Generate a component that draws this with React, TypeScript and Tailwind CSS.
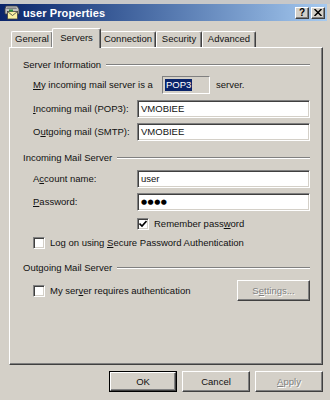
import React from "react";

const sunken =
  "border border-t-[#808080] border-l-[#808080] border-b-white border-r-white shadow-[inset_1px_1px_0_#404040,inset_-1px_-1px_0_#d4d0c8]";
const raised =
  "border border-t-white border-l-white border-r-[#404040] border-b-[#404040] shadow-[inset_-1px_-1px_0_#808080]";

function U({ children }: { children: React.ReactNode }) {
  return <span className="underline underline-offset-[1px] decoration-[1px]">{children}</span>;
}

function GroupHeader({ label }: { label: string }) {
  return (
    <div className="flex items-center h-[12px]">
      <span className="whitespace-nowrap">{label}</span>
      <div className="flex-1 ml-[5px] h-[2px] border-t border-t-[#808080] border-b border-b-white" />
    </div>
  );
}

function Field({ value, className = "" }: { value: React.ReactNode; className?: string }) {
  return (
    <div className={`bg-white ${sunken} h-[18px] flex items-center pl-[3px] ${className}`}>{value}</div>
  );
}

function Checkbox({ checked }: { checked?: boolean }) {
  return (
    <div className={`w-[12px] h-[12px] bg-white ${sunken} flex items-center justify-center shrink-0`}>
      {checked && (
        <svg width="8" height="8" viewBox="0 0 8 8">
          <path d="M0.5 3.5 L3 6 L7.5 1" stroke="#000" strokeWidth="1.6" fill="none" />
        </svg>
      )}
    </div>
  );
}

function Tab({ label, w, selected }: { label: string; w: number; selected?: boolean }) {
  return (
    <div
      style={{ width: w }}
      className={
        selected
          ? "relative z-10 h-[20px] -mb-px bg-[#d4d0c8] border-t border-l border-r border-t-white border-l-white border-r-[#404040] shadow-[inset_-1px_0_0_#808080] rounded-tl-[2px] rounded-tr-[2px] flex items-start justify-center pt-[3px] -mx-[1px]"
          : "h-[16px] border-t border-l border-r border-t-white border-l-white border-r-[#404040] shadow-[inset_-1px_0_0_#808080] rounded-tl-[2px] rounded-tr-[2px] flex items-start justify-center pt-[1px]"
      }
    >
      {label}
    </div>
  );
}

function Btn({
  children,
  w,
  disabled,
  def,
  h = 21,
}: {
  children: React.ReactNode;
  w: number;
  disabled?: boolean;
  def?: boolean;
  h?: number;
}) {
  const inner = (
    <div
      className={`${raised} bg-[#d4d0c8] flex items-center justify-center w-full h-full ${
        disabled ? "text-[#808080] [text-shadow:1px_1px_0_#fff]" : ""
      }`}
    >
      {children}
    </div>
  );
  return (
    <div style={{ width: w, height: h }} className={def ? "border border-black shrink-0" : "shrink-0"}>
      {inner}
    </div>
  );
}

export default function App() {
  return (
    <div className="w-[330px] h-[400px] bg-[#d4d0c8] overflow-hidden flex flex-col text-[9.5px] leading-[12px] text-[#111] font-['Liberation_Sans',Arial,sans-serif]">
      {/* top strip */}
      <div className="h-[4px] bg-[#c8c8c8]" />
      {/* title bar */}
      <div className="h-[17px] mr-[3px] bg-gradient-to-r from-[#0a246a] to-[#a6caf0] flex items-center pl-[4px] pr-[2px]">
        <svg width="16" height="15" viewBox="0 0 16 15" className="shrink-0">
          <path d="M2 1 H13 L15 4 V9 H1 V4 Z" fill="#c0c0c0" stroke="#404040" strokeWidth="0.8" />
          <path d="M3 2.5 H12 L13 4 H2 Z" fill="#808080" />
          <rect x="3.5" y="6.5" width="10" height="7.5" fill="#f8f0a0" stroke="#404040" strokeWidth="0.8" />
          <path d="M3.5 6.5 L8.5 10.5 L13.5 6.5" fill="none" stroke="#404040" strokeWidth="0.8" />
          <rect x="5" y="4.5" width="4" height="2" fill="#2e8b3a" />
        </svg>
        <span className="ml-[3px] text-white font-bold text-[11px] tracking-[0.1px]">user Properties</span>
        <div className="flex-1" />
        <div className="flex gap-[2px]">
          <div className={`${raised} bg-[#d4d0c8} w-[14px] h-[12px] bg-[#d4d0c8] flex items-center justify-center text-black font-bold text-[10px] leading-none`}>
            ?
          </div>
          <div className={`${raised} w-[14px] h-[12px] bg-[#d4d0c8] flex items-center justify-center`}>
            <svg width="8" height="7" viewBox="0 0 8 7">
              <path d="M0.5 0 L7.5 7 M7.5 0 L0.5 7" stroke="#000" strokeWidth="1.5" />
            </svg>
          </div>
        </div>
      </div>

      {/* tabs */}
      <div className="mt-[7px] h-[19px] flex items-end pl-[11px]">
        <Tab label="General" w={42} />
        <Tab label="Servers" w={49} selected />
        <Tab label="Connection" w={56} />
        <Tab label="Security" w={46} />
        <Tab label="Advanced" w={54} />
      </div>

      {/* panel */}
      <div className={`ml-[9px] w-[314px] h-[318px] ${raised} pl-[13px] pr-[12px] flex flex-col`}>
        <div className="mt-[11px]">
          <GroupHeader label="Server Information" />
        </div>

        <div className="mt-[5px] flex items-center pl-[10px] h-[18px]">
          <span className="w-[129px] whitespace-nowrap">
            <U>M</U>y incoming mail server is a
          </span>
          <div className="w-[48px] h-[18px] border border-t-[#808080] border-l-[#808080] border-b-white border-r-white flex items-center pl-[2px]">
            <span className="bg-[#0a246a] text-white px-[1px]">POP3</span>
          </div>
          <span className="ml-[6px]">server.</span>
        </div>

        <div className="mt-[6px] flex items-center pl-[10px]">
          <span className="flex-1 whitespace-nowrap">
            <U>I</U>ncoming mail (POP3):
          </span>
          <Field value="VMOBIEE" className="w-[173px]" />
        </div>

        <div className="mt-[5px] flex items-center pl-[10px]">
          <span className="flex-1 whitespace-nowrap">
            O<U>u</U>tgoing mail (SMTP):
          </span>
          <Field value="VMOBIEE" className="w-[173px]" />
        </div>

        <div className="mt-[11px]">
          <GroupHeader label="Incoming Mail Server" />
        </div>

        <div className="mt-[6px] flex items-center pl-[10px]">
          <span className="flex-1 whitespace-nowrap">
            A<U>c</U>count name:
          </span>
          <Field value="user" className="w-[173px]" />
        </div>

        <div className="mt-[5px] flex items-center pl-[10px]">
          <span className="flex-1 whitespace-nowrap">
            <U>P</U>assword:
          </span>
          <Field
            value={<span className="font-['DejaVu_Sans',sans-serif] text-[7px] tracking-[0.5px] text-black">●●●●</span>}
            className="w-[173px]"
          />
        </div>

        <div className="mt-[6px] flex items-center pl-[114px] h-[13px]">
          <Checkbox checked />
          <span className="ml-[5px] whitespace-nowrap">
            Remember pass<U>w</U>ord
          </span>
        </div>

        <div className="mt-[6px] flex items-center pl-[10px] h-[13px]">
          <Checkbox />
          <span className="ml-[5px] whitespace-nowrap">
            Log on using <U>S</U>ecure Password Authentication
          </span>
        </div>

        <div className="mt-[13px]">
          <GroupHeader label="Outgoing Mail Server" />
        </div>

        <div className="mt-[6px] flex items-center pl-[10px] h-[21px]">
          <Checkbox />
          <span className="ml-[5px] whitespace-nowrap flex-1">
            My ser<U>v</U>er requires authentication
          </span>
          <Btn w={73} disabled>
            <span>
              S<U>e</U>ttings...
            </span>
          </Btn>
        </div>
      </div>

      {/* bottom buttons */}
      <div className="mt-[6px] flex justify-end gap-[5px] pr-[7px]">
        <Btn w={68} def>
          OK
        </Btn>
        <Btn w={68}>Cancel</Btn>
        <Btn w={68} disabled>
          <U>A</U>pply
        </Btn>
      </div>
    </div>
  );
}
